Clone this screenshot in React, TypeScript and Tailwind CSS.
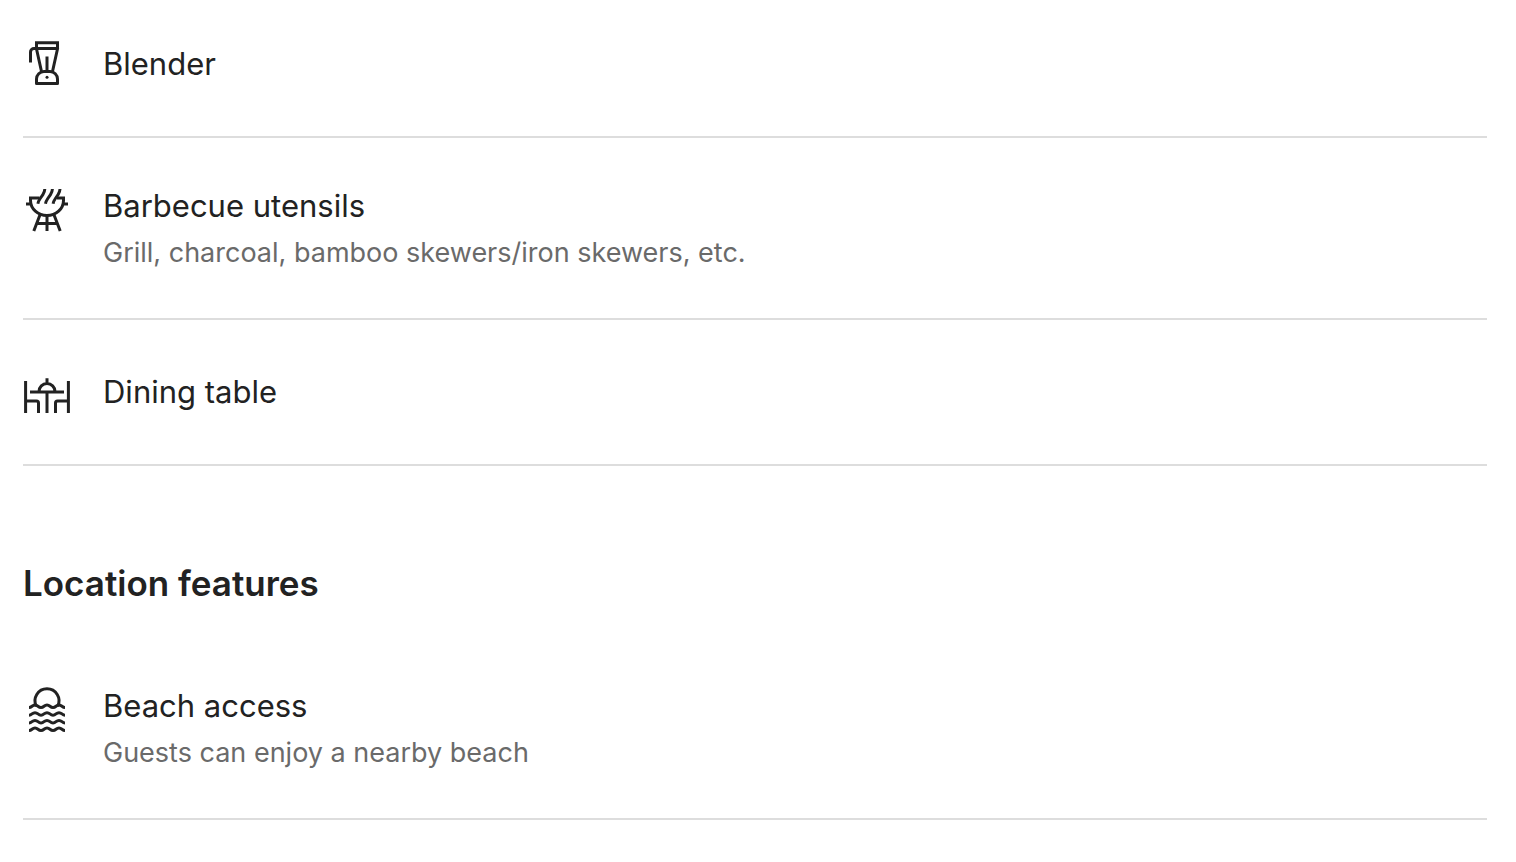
import type { ReactNode } from 'react';

function Icon({ children }: { children: ReactNode }) {
  return (
    <svg
      viewBox="0 0 48 48"
      className="size-12 shrink-0"
      fill="none"
      stroke="currentColor"
      strokeWidth="3"
      aria-hidden="true"
    >
      {children}
    </svg>
  );
}

function BlenderIcon() {
  return (
    <Icon>
      <path d="M7.500 22.5V12a3.500 3.500 0 0 1 3.500-3.500h23.500M13.500 9V2.700h21V9M13.300 8l5.200 23.500M34.700 8l-5.200 23.500M24 16.500v15" />
      <path d="M13.500 43.500V39a7.500 7.500 0 0 1 7.500-7.500h6a7.500 7.500 0 0 1 7.500 7.500v4.500z" strokeLinejoin="round" />
      <circle cx="24" cy="37.300" r="1.500" fill="currentColor" stroke="none" />
    </Icon>
  );
}

function GrillIcon() {
  return (
    <Icon>
      <path d="M3 18h5M40 18h5M16.500 12h-9v2.500C7.500 23 15 29.500 24 29.500S40.500 23 40.500 14.500V12H34" />
      <path d="M21.800 3c-.1 2.200-.7 3.800-1.900 5.600l-2.700 3.900c-1.200 1.700-2 3.300-2.300 5.300M29.400 3c-.1 2.200-.7 3.800-1.900 5.600l-2.700 3.900c-1.200 1.700-2 3.300-2.300 5.300M37 3c-.1 2.200-.7 3.800-1.900 5.600l-2.700 3.900c-1.200 1.700-2 3.300-2.300 5.300" />
      <path d="M17.300 28l-6.500 17M30.700 28l6.500 17M24 29.500V45M14 37.500h20" />
    </Icon>
  );
}

function DiningIcon() {
  return (
    <Icon>
      <path d="M2.600 13v32M2.600 33h10.900a2 2 0 0 1 2 2v10M45.400 13v32M45.400 33H34.500a2 2 0 0 0-2 2v10" />
      <path d="M7 24h34M24 24v21M16 24v-.5a8 8 0 0 1 16 0v.5M24 10.300v5" />
    </Icon>
  );
}

const WAVE = 'c3 0 3-2.500 6-2.500s3 2.500 6 2.500 3-2.500 6-2.500 3 2.500 6 2.500 3-2.500 6-2.500 3 2.500 6 2.500';

function BeachIcon() {
  return (
    <Icon>
      <path d="M13.300 20.300A12 12 0 1 1 34.700 20.300" />
      {[21.5, 29.2, 36.9, 44.5].map((y) => (
        <path key={y} d={`M6 ${y}${WAVE}`} />
      ))}
    </Icon>
  );
}

function Amenity({ icon, title, note }: { icon: ReactNode; title: string; note?: string }) {
  return (
    <li className="flex items-start gap-8 border-b-2 border-[#dddddd] py-12 first:pt-0">
      {icon}
      <div className="flex min-h-12 flex-col justify-center">
        <h3 className="text-[31px] leading-[40px]">{title}</h3>
        {note && <p className="mt-2.5 text-[27px] leading-[34px] text-[#6a6a6a]">{note}</p>}
      </div>
    </li>
  );
}

export default function App() {
  return (
    <main className="bg-white pt-10 pr-[29px] pl-[23px] font-['Inter',sans-serif] text-[#222222]">
      <ul>
        <Amenity icon={<BlenderIcon />} title="Blender" />
        <Amenity
          icon={<GrillIcon />}
          title="Barbecue utensils"
          note="Grill, charcoal, bamboo skewers/iron skewers, etc."
        />
        <Amenity icon={<DiningIcon />} title="Dining table" />
      </ul>
      <section className="pt-24">
        <h2 className="text-[35px] leading-[42px] font-semibold">Location features</h2>
        <ul className="pt-[82px]">
          <Amenity icon={<BeachIcon />} title="Beach access" note="Guests can enjoy a nearby beach" />
        </ul>
      </section>
    </main>
  );
}
